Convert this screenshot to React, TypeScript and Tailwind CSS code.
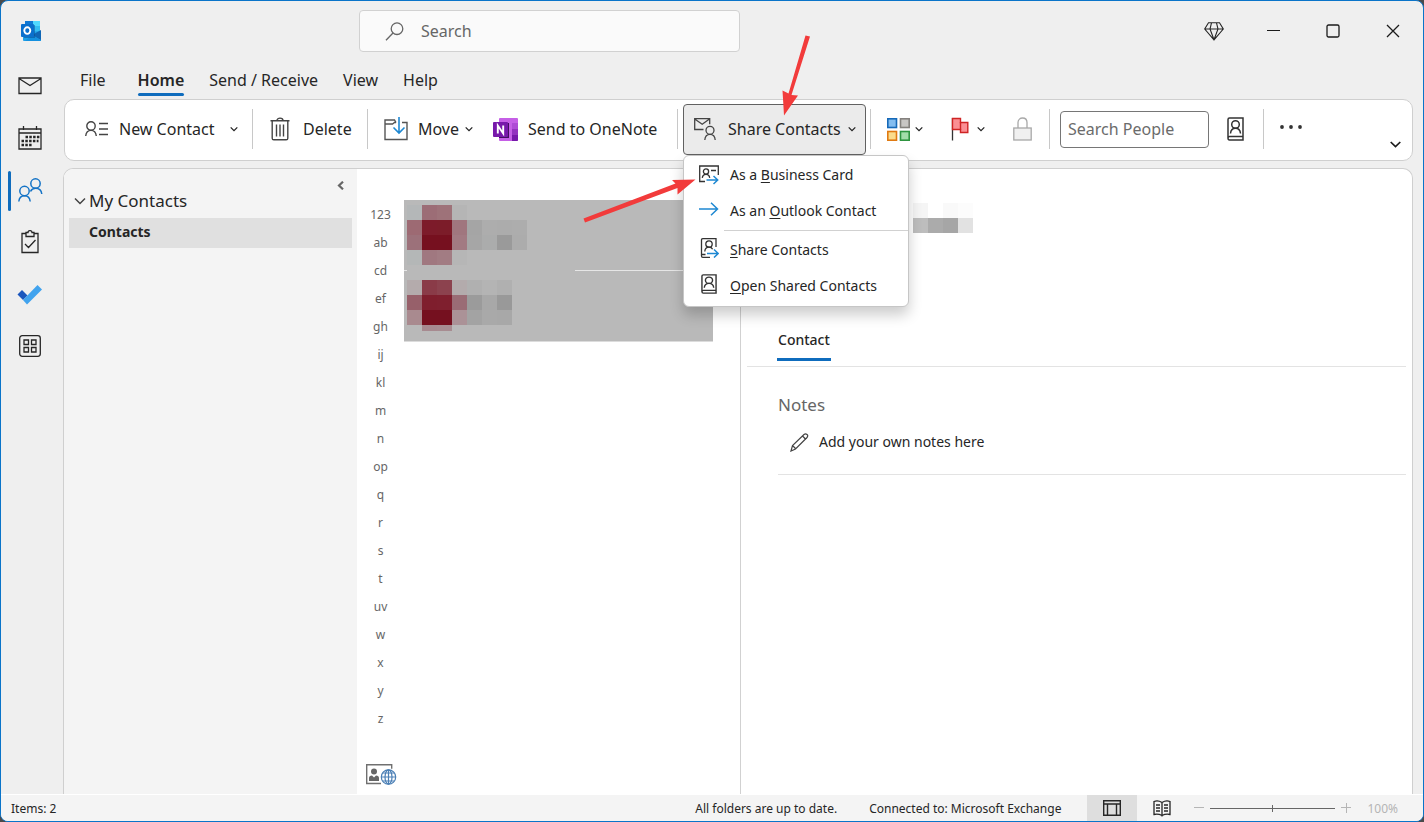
import React, { useState } from 'react';

const alphabet = [
  '123', 'ab', 'cd', 'ef', 'gh', 'ij', 'kl', 'm', 'n', 'op',
  'q', 'r', 's', 't', 'uv', 'w', 'x', 'y', 'z'
];

const tabs = ['File', 'Home', 'Send / Receive', 'View', 'Help'];

// Redacted rows of the contact list, one colour per 15px block
const mosaic = [
  { y: 0, h: 15, colors: ['#b4b7b8', '#9c6d76', '#9e7279', '#b5b5b5'] },
  { y: 15, h: 15, colors: ['#9d6a73', '#7d1b2a', '#7c1c29', '#a0767e', '#a5a5a5', '#adadad', '#acacac', '#adadad'] },
  { y: 30, h: 15, colors: ['#9c717a', '#76101f', '#76101f', '#a27a82', '#a6a6a6', '#abacac', '#9a9a9a', '#acacac'] },
  { y: 45, h: 15, colors: ['#b4b7b7', '#a07880', '#a27c83', '#b6b6b6'] },
  { y: 60, h: 15, colors: Array(11).fill('#b9b9b9') },
  { y: 75, h: 15, colors: ['#b4abac', '#8a3b48', '#8c424e', '#b3abac', '#b0b0b0', '#b4b4b4', '#b0b0b0'] },
  { y: 90, h: 15, colors: ['#97606a', '#7f1e2d', '#7f1f2e', '#9a6c75', '#9b9b9b', '#a8a8a8', '#999999'] },
  { y: 105, h: 15, colors: ['#a98a8f', '#75101f', '#75101f', '#ab9297', '#a3a3a3', '#a9a9a9', '#a8a8a8'] },
  { y: 120, h: 6, colors: ['#b9b9b9', '#a78a90', '#a78c91'] }
];

function Chevron({ className = '' }) {
  return (
    <svg className={`w-2 h-2 shrink-0 ${className}`} viewBox="0 0 8 8" fill="none" stroke="#262626" strokeWidth="1.3">
      <path d="M.7 2.4 4 5.6l3.3-3.2" />
    </svg>
  );
}

function Divider() {
  return <div className="w-px h-10 bg-[#c8c8c8] shrink-0" />;
}

function OutlookLogo() {
  return (
    <svg className="w-5 h-5" viewBox="0 0 20 20">
      <rect x="4" y="0" width="15" height="14" rx=".5" fill="#28a8ea" />
      <rect x="4" y="0" width="8" height="5" fill="#0f78d4" />
      <rect x="12" y="0" width="7" height="5" fill="#50d9ff" />
      <rect x="12" y="5" width="7" height="5" fill="#34bdf2" />
      <path d="M2 11h18v8q0 1-1 1H3q-1 0-1-1z" fill="#1da0e8" />
      <path d="M20 9v10l-9-5z" fill="#1066b5" />
      <path d="M11 14l9 5.500v.5H4l7-6z" fill="#1490df" />
      <rect x="3" y="4" width="11" height="13" fill="#064a8c" opacity=".5" />
      <rect x="0" y="3" width="13" height="13" rx="1" fill="#0a6fcd" />
      <ellipse cx="6.300" cy="9.600" rx="3" ry="3.300" fill="none" stroke="#fff" strokeWidth="1.900" />
    </svg>
  );
}

function MailIcon() {
  return (
    <svg width="24" height="18" viewBox="0 0 24 18" fill="none" stroke="#262626" strokeWidth="1.3">
      <path d="M1 1h22v15.500H1zM1 1.500l11 7 11-7" />
    </svg>
  );
}

function CalendarIcon() {
  return (
    <svg width="24" height="24" viewBox="0 0 24 24" fill="none" stroke="#262626" strokeWidth="1.3">
      <path d="M1 3h22v20H1zM1 7h22M5.500 0v4M18.500 0v4" />
      <path d="M7.500 11h14M3.500 15h17M3.500 19h11" strokeWidth="2.400" strokeDasharray="2.500 1.300" />
    </svg>
  );
}

function PeopleIcon() {
  return (
    <svg width="25" height="24" viewBox="0 0 25 24" fill="none" stroke="#1473c6" strokeWidth="1.500">
      <circle cx="17.500" cy="5.500" r="4.700" />
      <circle cx="6.500" cy="13" r="4.700" />
      <path d="M.8 23.500c.5-4 2.500-5.700 5.700-5.700s5.200 1.700 5.700 5.700M12.500 13.500c1-2.300 2.600-3.200 5-3.200 3.400 0 5.800 2 6.300 5.700" />
    </svg>
  );
}

function TasksIcon() {
  return (
    <svg width="18" height="24" viewBox="0 0 18 24" fill="none" stroke="#262626" strokeWidth="1.300">
      <path d="M5 3.500H1v19h16v-19h-4" />
      <path d="M5 6.500v-4h2c0-2.500 4-2.500 4 0h2v4zM4 14l3.500 3.500 7-7.500" />
    </svg>
  );
}

function TodoIcon() {
  return (
    <svg width="26" height="21" viewBox="0 0 26 21">
      <path d="M.5 10.500 5 6l5.500 5.500L6 16z" fill="#1a56bd" />
      <path d="M6 16 20.500 1 25 5.500 10 20.500z" fill="#41a3ee" />
    </svg>
  );
}

function AppsIcon() {
  return (
    <svg width="22" height="22" viewBox="0 0 22 22" fill="none" stroke="#262626" strokeWidth="1.300">
      <rect x=".7" y=".7" width="20.600" height="20.600" rx="2.500" />
      <path d="M5 5h4.500v4.500H5zM12.500 5H17v4.500h-4.500zM5 12.500h4.500V17H5zM12.500 12.500H17V17h-4.500z" />
    </svg>
  );
}

function NewContactIcon() {
  return (
    <svg width="24" height="16" viewBox="0 0 24 16" fill="none" stroke="#444" strokeWidth="1.400">
      <circle cx="6" cy="5" r="4.200" />
      <path d="M.7 15c.4-3.600 2.300-5.600 5.300-5.600s4.900 2 5.300 5.600M14 2.500h9M14 8h9M14 13.500h9" />
    </svg>
  );
}

function TrashIcon() {
  return (
    <svg width="20" height="24" viewBox="0 0 20 24" fill="none" stroke="#444" strokeWidth="1.400">
      <path d="M.5 3.700h19M2.200 3.700v17.500q0 1.600 1.600 1.600h12.400q1.600 0 1.600-1.600V3.700M7 3.500C7 .3 13 .3 13 3.500M6.500 7.500v12M10 7.500v12M13.500 7.500v12" />
    </svg>
  );
}

function MoveIcon() {
  return (
    <svg width="24" height="24" viewBox="0 0 24 24" fill="none" stroke="#555" strokeWidth="1.400">
      <path d="M12 5.500 10.500 3H1v19.500h22v-17h-5M1 7h7.500l2-1.500H12" />
      <path d="M15 0v16M9.500 10.500 15 16l5.500-5.500" stroke="#1e88d2" strokeWidth="1.600" />
    </svg>
  );
}

function OneNoteIcon() {
  return (
    <svg width="25" height="24" viewBox="0 0 25 24">
      <rect x="6" y="1" width="19" height="23" rx="1" fill="#c55fe6" />
      <rect x="19" y="6" width="6" height="6" fill="#ae4bd5" />
      <rect x="19" y="12" width="6" height="6" fill="#9332bf" />
      <path d="M19 18h6v5q0 1-1 1h-5z" fill="#7719aa" />
      <rect x="6" y="6" width="10" height="15" fill="#41105f" />
      <rect x="0" y="5" width="15" height="15" rx="1" fill="#7719aa" />
      <path d="M4.800 16.500v-8l5.400 8v-8" fill="none" stroke="#fff" strokeWidth="1.900" />
    </svg>
  );
}

function ShareContactsIcon() {
  return (
    <svg width="22" height="23" viewBox="0 0 22 23" fill="none" stroke="#444" strokeWidth="1.300">
      <path d="M9.500 11.500H.7V.7h15v5.500M.7 1l7.500 5.300L15.500 1" />
      <circle cx="16" cy="12.300" r="4" />
      <path d="M10.800 22c.3-3.700 2-5.600 5.200-5.600s4.900 1.900 5.200 5.600" />
    </svg>
  );
}

function CategorizeIcon() {
  return (
    <svg width="23" height="23" viewBox="0 0 23 23" strokeWidth="1.600">
      <rect x=".8" y=".8" width="8.700" height="8.700" fill="#83bdf0" stroke="#1669b8" />
      <rect x="13.500" y=".8" width="8.700" height="8.700" fill="#c8c6c4" stroke="#84817e" />
      <rect x=".8" y="13.500" width="8.700" height="8.700" fill="#fbdc8b" stroke="#e07a12" />
      <rect x="13.500" y="13.500" width="8.700" height="8.700" fill="#a2dda9" stroke="#2e9440" />
    </svg>
  );
}

function FlagIcon() {
  return (
    <svg width="18" height="24" viewBox="0 0 18 24">
      <path d="M1.500 1v22.500" stroke="#333" strokeWidth="1.300" />
      <path d="M1.500 1.500h8v4h7.300v10H9.500v-3h-8z" fill="#fb8f94" stroke="#cf2424" strokeWidth="1.400" />
      <path d="M9.500 5v8" stroke="#cf2424" strokeWidth="1.400" />
    </svg>
  );
}

function LockIcon() {
  return (
    <svg width="19" height="24" viewBox="0 0 19 24" stroke="#a8a8a8" strokeWidth="1.300">
      <path d="M5 11V5.500c0-6 9-6 9 0V11" fill="none" />
      <rect x=".8" y="11" width="17.400" height="12" fill="#f0f0f0" />
    </svg>
  );
}

function AddressBookIcon({ width = 17, height = 24, className = '' }) {
  return (
    <svg className={className} width={width} height={height} viewBox="0 0 17 24" preserveAspectRatio="none" fill="none" stroke="#333" strokeWidth="1.500">
      <path d="M16 19.500V1H2.500Q1 1 1 2.500V21q0 2 1.500 2H16v-3.500H2.500Q1 19.500 1 21" />
      <circle cx="8.500" cy="7.500" r="3.800" />
      <path d="M3.500 16.500c.3-3.500 2-5.200 5-5.200s4.700 1.700 5 5.200" />
    </svg>
  );
}

function BusinessCardIcon() {
  return (
    <svg width="20" height="20" viewBox="0 0 20 20" fill="none" stroke="#333" strokeWidth="1.300">
      <path d="M6 16.500H.7V1h18.600v9M12 5.500h5" />
      <circle cx="7" cy="6.500" r="2.600" />
      <path d="M3.300 12.800c.3-2.500 1.500-3.500 3.700-3.500s3.400 1 3.700 3.500" />
      <path d="M7.500 15h11M14.500 11l4.200 4-4.200 4" stroke="#1e88d2" strokeWidth="1.500" />
    </svg>
  );
}

function ArrowIcon() {
  return (
    <svg className="mb-1" width="20" height="14" viewBox="0 0 20 14" fill="none" stroke="#1e88d2" strokeWidth="1.500">
      <path d="M0 7h18.500M12 .8 18.500 7 12 13.200" />
    </svg>
  );
}

function ShareBookIcon() {
  return (
    <svg className="mb-1" width="20" height="20" viewBox="0 0 20 20" fill="none" stroke="#333" strokeWidth="1.300">
      <path d="M17 9V.7H3.800Q2.500.7 2.500 2v16q0 1.300 1.300 1.300H11M2.500 16.500h4" />
      <circle cx="10" cy="6" r="3.200" />
      <path d="M5.800 13.500c.2-3 1.600-4.300 4.200-4.300 1.800 0 3 .7 3.600 2" />
      <path d="M8 15.500h11M15 11.500l4.200 4-4.200 4" stroke="#1e88d2" strokeWidth="1.500" />
    </svg>
  );
}

function CardGlobeIcon() {
  return (
    <svg width="31" height="21" viewBox="0 0 31 21" fill="none">
      <path d="M15 19.500H.7V.7h25v4" stroke="#707070" strokeWidth="1.400" />
      <circle cx="8" cy="7.500" r="3" fill="#666" />
      <path d="M3 17v-3q0-2.500 3-2.500l2 2 2-2q3 0 3 2.500v3z" fill="#666" />
      <g stroke="#4a7fb5" strokeWidth="1.200">
        <circle cx="22.500" cy="13" r="7.200" />
        <ellipse cx="22.500" cy="13" rx="3.500" ry="7.200" />
        <path d="M15.300 13h14.400M22.500 5.800v14.400M16.500 9h12M16.500 17h12" />
      </g>
    </svg>
  );
}

function DiamondIcon() {
  return (
    <svg width="20" height="19" viewBox="0 0 20 19" fill="none" stroke="#262626" strokeWidth="1.100">
      <path d="M4.500.8h11L19.300 7 10 17.800.7 7zM.7 7h18.600M7.500.8 6 7l4 10.800L14 7 12.500.8" />
    </svg>
  );
}

const rail = [
  { label: 'Mail', icon: <MailIcon /> },
  { label: 'Calendar', icon: <CalendarIcon /> },
  { label: 'People', icon: <PeopleIcon /> },
  { label: 'Tasks', icon: <TasksIcon /> },
  { label: 'To Do', icon: <TodoIcon /> },
  { label: 'More Apps', icon: <AppsIcon /> }
];

function MenuItem({ icon, children }) {
  return (
    <button role="menuitem" className="flex items-center w-full h-9 text-left hover:bg-gray-100">
      <span className="flex justify-center w-[50px] shrink-0">{icon}</span>
      <span className="-ml-1 whitespace-nowrap">{children}</span>
    </button>
  );
}

export default function App() {
  const [activeTab, setActiveTab] = useState('Home');
  const [activeApp, setActiveApp] = useState('People');
  const [menuOpen, setMenuOpen] = useState(true);

  return (
    <div className="bg-[#4a4a4a] font-['Noto_Sans',sans-serif] text-[#262626]">
      <div className="relative flex flex-col min-h-screen bg-[#efefef] border border-[#0a74c9] rounded-lg overflow-hidden">
        {/* Title bar */}
        <header className="flex items-center h-[58px] pt-0.5 shrink-0">
          <div className="flex w-[358px] pl-5 shrink-0">
            <OutlookLogo />
          </div>
          <label className="flex items-center w-[381px] h-[42px] bg-[#fafafa] border border-[#d1d1d1] rounded">
            <svg className="ml-[25px] mr-[17px] shrink-0" width="19" height="19" viewBox="0 0 19 19" fill="none" stroke="#666" strokeWidth="1.3">
              <circle cx="12" cy="6.700" r="5.800" />
              <path d="M8 11 1 18.300" />
            </svg>
            <input type="text" aria-label="Search" placeholder="Search" className="flex-1 min-w-0 text-base bg-transparent outline-none placeholder:text-[#666]" />
          </label>
          <div className="flex ml-auto">
            <button aria-label="Premium" className="flex items-center justify-center w-[60px] h-10 pl-0.5"><DiamondIcon /></button>
            <button aria-label="Minimize" className="flex items-center justify-center w-[60px] h-10">
              <svg width="13" height="13" viewBox="0 0 13 13" stroke="#1b1b1b" strokeWidth="1.2"><path d="M0 5.500h13" /></svg>
            </button>
            <button aria-label="Maximize" className="flex items-center justify-center w-[60px] h-10">
              <svg width="14" height="14" viewBox="0 0 14 14" fill="none" stroke="#1b1b1b" strokeWidth="1.3"><rect x="1" y="1" width="12" height="12" rx="1.5" /></svg>
            </button>
            <button aria-label="Close" className="flex items-center justify-center w-[60px] h-10">
              <svg width="14" height="14" viewBox="0 0 14 14" stroke="#1b1b1b" strokeWidth="1.3"><path d="M1 1l12 12M13 1 1 13" /></svg>
            </button>
          </div>
        </header>

        <div className="flex flex-1">
          {/* App rail */}
          <nav className="flex flex-col w-[62px] pt-px shrink-0">
            {rail.map(item => (
              <button
                key={item.label}
                aria-label={item.label}
                onClick={() => setActiveApp(item.label)}
                className="relative flex items-center justify-center h-[52px] pr-1"
              >
                {activeApp === item.label && (
                  <span className="absolute left-[7px] top-[7px] w-[3px] h-10 rounded bg-[#0f6cbd]" />
                )}
                {item.icon}
              </button>
            ))}
          </nav>

          <div className="flex flex-col flex-1 min-w-0 pr-2.5">
            {/* Tabs */}
            <div role="tablist" className="flex gap-[25px] h-10 pl-[17px] text-base shrink-0">
              {tabs.map(tab => (
                <button
                  key={tab}
                  role="tab"
                  aria-selected={activeTab === tab}
                  onClick={() => setActiveTab(tab)}
                  className={`relative pt-0.5 first:mr-[7px] whitespace-nowrap ${activeTab === tab ? 'font-semibold' : ''}`}
                >
                  {tab}
                  {activeTab === tab && (
                    <span className="absolute inset-x-0 bottom-[3px] h-[3px] rounded bg-[#0f6cbd]" />
                  )}
                </button>
              ))}
            </div>

            {/* Ribbon */}
            <div className="relative flex items-center h-[62px] ml-px pb-0.5 bg-white border border-[#cfcfcf] rounded-[10px] text-base whitespace-nowrap shrink-0">
              <button className="flex items-center w-[187px] h-[50px] pl-5 shrink-0">
                <NewContactIcon />
                <span className="ml-2.5">New Contact</span>
                <Chevron className="ml-auto mr-3.5" />
              </button>
              <Divider />
              <button className="flex items-center w-[114px] h-[50px] pl-[17px] shrink-0">
                <TrashIcon />
                <span className="ml-[13px]">Delete</span>
              </button>
              <Divider />
              <button className="flex items-center w-[109px] h-[50px] pl-4 shrink-0">
                <MoveIcon />
                <span className="ml-2.5">Move</span>
                <Chevron className="ml-auto mr-1" />
              </button>
              <button className="flex items-center w-[200px] h-[50px] pl-4 shrink-0">
                <OneNoteIcon />
                <span className="ml-2.5">Send to OneNote</span>
              </button>
              <Divider />
              <div className="relative ml-[5px] mr-1 shrink-0">
                <button
                  aria-haspopup="menu"
                  aria-expanded={menuOpen}
                  onClick={() => setMenuOpen(!menuOpen)}
                  className="flex items-center w-[183px] h-[51px] pl-2.5 bg-[#ebebeb] border border-[#616161] rounded"
                >
                  <ShareContactsIcon />
                  <span className="ml-3">Share Contacts</span>
                  <Chevron className="ml-auto mr-[9px]" />
                </button>
                {menuOpen && (
                  <div role="menu" className="absolute z-20 left-0 top-[51px] w-[226px] pt-px pb-0.5 bg-white border border-[#c6c6c6] rounded-md shadow-[0_8px_14px_rgba(0,0,0,0.2)] text-sm">
                    <MenuItem icon={<BusinessCardIcon />}>As a <u className="underline-offset-2">B</u>usiness Card</MenuItem>
                    <MenuItem icon={<ArrowIcon />}>As an <u className="underline-offset-2">O</u>utlook Contact</MenuItem>
                    <div className="h-px mt-px mb-px ml-10 bg-[#d1d1d1]" />
                    <MenuItem icon={<ShareBookIcon />}><u className="underline-offset-2">S</u>hare Contacts</MenuItem>
                    <MenuItem icon={<AddressBookIcon width={16} height={20} className="mb-1" />}><u className="underline-offset-2">O</u>pen Shared Contacts</MenuItem>
                  </div>
                )}
              </div>
              <Divider />
              <button aria-label="Categorize" className="flex items-center gap-[5px] w-16 h-[50px] pl-4 shrink-0">
                <CategorizeIcon />
                <Chevron />
              </button>
              <button aria-label="Follow Up" className="flex items-center gap-2 w-[60px] h-[50px] pl-4 shrink-0">
                <FlagIcon />
                <Chevron />
              </button>
              <button aria-label="Private" className="flex items-center w-[54px] h-[50px] pl-[18px] shrink-0">
                <LockIcon />
              </button>
              <Divider />
              <input
                type="text"
                aria-label="Search People"
                placeholder="Search People"
                className="w-[149px] h-[37px] ml-2.5 px-[7px] border border-[#767676] rounded outline-none text-base placeholder:text-[#6b6b6b] shrink-0"
              />
              <button aria-label="Address Book" className="flex items-center justify-center w-[54px] h-[50px] pr-px shrink-0">
                <AddressBookIcon />
              </button>
              <Divider />
              <button aria-label="More commands" className="flex items-center justify-center w-[54px] h-[50px] pb-1 shrink-0">
                <svg width="22" height="4" viewBox="0 0 22 4" fill="#333">
                  <circle cx="2" cy="2" r="1.900" />
                  <circle cx="11" cy="2" r="1.900" />
                  <circle cx="20" cy="2" r="1.900" />
                </svg>
              </button>
              <button aria-label="Ribbon options" className="self-end ml-auto px-[11px] pb-2.5">
                <svg width="11" height="7" viewBox="0 0 11 7" fill="none" stroke="#1b1b1b" strokeWidth="1.7"><path d="M.7 1 5.500 5.500 10.300 1" /></svg>
              </button>
            </div>

            {/* Panels */}
            <div className="flex flex-1 mt-[7px] bg-white border border-b-0 border-[#cfcfcf] rounded-t-[10px]">
              <aside className="w-[293px] px-[5px] bg-[#f4f4f4] rounded-tl-[9px] shrink-0">
                <div className="flex justify-end h-[17px] pt-[11px] pr-2">
                  <button aria-label="Collapse folder pane" className="h-2.5">
                    <svg width="7" height="9" viewBox="0 0 7 9" fill="none" stroke="#666" strokeWidth="2.2"><path d="M6 .7 2 4.500l4 3.800" /></svg>
                  </button>
                </div>
                <button className="flex items-center gap-[3px] h-8 pl-[5px] pb-0.5 text-[17px]">
                  <svg width="12" height="8" viewBox="0 0 12 8" fill="none" stroke="#444" strokeWidth="1.5"><path d="M1 1.500 6 6.500l5-5" /></svg>
                  My Contacts
                </button>
                <button className="block w-[283px] h-[30px] pl-5 pb-0.5 bg-[#e0e0e0] text-left text-sm font-bold">Contacts</button>
              </aside>

              <section className="flex w-[383px] shrink-0">
                <div className="flex flex-col w-[47px] pt-8 text-xs text-[#666] shrink-0">
                  {alphabet.map(letter => (
                    <button key={letter} className="h-7">{letter}</button>
                  ))}
                  <button aria-label="Additional languages" className="w-8 ml-[9px] mt-auto mb-[9px]">
                    <CardGlobeIcon />
                  </button>
                </div>
                <div className="relative w-[309px] mt-[31px]">
                  <div className="h-[70px] bg-[#b9b9b9]" />
                  <div className="h-px bg-[#e6e6e6]" />
                  <div className="h-[70px] bg-[#b9b9b9]" />
                  <div className="h-px bg-[#dcdcdc]" />
                  <svg className="absolute left-[3px] top-[5px]" width="168" height="126" shapeRendering="crispEdges">
                    {mosaic.map(row =>
                      row.colors.map((color, i) => (
                        <rect key={`${row.y}-${i}`} x={i * 15} y={row.y} width={i === 10 ? 18 : 15} height={row.h} fill={color} />
                      ))
                    )}
                  </svg>
                </div>
              </section>

              {/* Reading pane */}
              <section className="flex-1 min-w-0 pl-1.5 pr-1.5 border-l border-[#d1d1d1]">
                <svg className="ml-[166px] mt-[34px]" width="60" height="30" shapeRendering="crispEdges">
                  <rect width="15" height="15" fill="#f5f5f5" />
                  <rect x="30" width="15" height="15" fill="#f9f9f9" />
                  <rect x="45" width="15" height="15" fill="#fcfcfc" />
                  <rect y="15" width="15" height="15" fill="#bdbdbd" />
                  <rect x="15" y="15" width="15" height="15" fill="#ababab" />
                  <rect x="30" y="15" width="15" height="15" fill="#a6a6a6" />
                  <rect x="45" y="15" width="15" height="15" fill="#e2e2e2" />
                </svg>
                <div className="flex mt-[93px] h-[41px] pl-[30px] border-b border-[#e3e3e3]">
                  <button className="h-[35px] px-px pb-1 border-b-3 border-[#0f6cbd] text-sm font-medium">Contact</button>
                </div>
                <div className="ml-[31px] h-[108px] border-b border-[#e3e3e3]">
                  <h2 className="pt-[26px] text-[17px] leading-6 text-[#666]">Notes</h2>
                  <button className="flex items-center mt-[15px] ml-3 h-5 text-sm whitespace-nowrap">
                    <svg className="mr-2.5" width="19" height="19" viewBox="0 0 19 19" fill="none" stroke="#444" strokeWidth="1.200">
                      <path d="M1 18l1.500-5.500L14 1.500q1.500-1.200 3 0t0 3L5.500 16zM12.500 3l3.500 3.500M2.500 12.500 6 16" />
                    </svg>
                    Add your own notes here
                  </button>
                </div>
              </section>
            </div>
          </div>
        </div>

        {/* Status bar */}
        <footer className="flex items-center h-[27px] pl-2.5 bg-[#f4f4f4] border-t border-white text-xs whitespace-nowrap shrink-0">
          <span className="pt-px">Items: 2</span>
          <span className="ml-auto pt-px">All folders are up to date.</span>
          <span className="ml-8 mr-[26px] pt-px">Connected to: Microsoft Exchange</span>
          <button aria-label="Normal view" className="flex items-center justify-center w-[50px] h-full bg-[#dedede]">
            <svg width="18" height="16" viewBox="0 0 18 16" fill="none" stroke="#262626" strokeWidth="1.400"><path d="M.7.700h16.600v14.600H.7zM.7 4h16.600M4.500 4v11M13.500 4v11" /></svg>
          </button>
          <button aria-label="Reading view" className="flex items-center justify-center w-[49px] h-full">
            <svg width="18" height="17" viewBox="0 0 18 17" fill="none" stroke="#262626" strokeWidth="1.300">
              <path d="M9 2.500Q5 0 1 1.500v13q4-1 8 1 4-2 8-1v-13Q13 0 9 2.500v14" />
              <path d="M3 5h4M3 8h4M3 11h4M11 5h4M11 8h4M11 11h4" />
            </svg>
          </button>
          <button aria-label="Zoom out" className="ml-1 p-1">
            <svg width="10" height="10" viewBox="0 0 10 10" stroke="#b5b5b5"><path d="M0 4.500h10" /></svg>
          </button>
          <div className="relative flex items-center justify-center w-[125px] h-5 mx-0.5">
            <div className="absolute inset-x-0 h-px bg-[#666]" />
            <div className="w-px h-[7px] bg-[#666]" />
            <input type="range" aria-label="Zoom" className="absolute inset-0 w-full opacity-0" />
          </div>
          <button aria-label="Zoom in" className="p-1">
            <svg width="10" height="10" viewBox="0 0 10 10" stroke="#b5b5b5"><path d="M0 4.500h10M5.500 0v10" /></svg>
          </button>
          <span className="ml-3 mr-[25px] pt-px text-[#b5b5b5]">100%</span>
        </footer>

        {/* Callout arrows */}
        <svg className="absolute left-0 top-0 z-30 pointer-events-none" width="860" height="240" fill="#f23b3b">
          <path d="M804.500 34.500 809 35.500 790.500 94 797 94.500 783 114.500 781.500 89.500 787.500 92.500z" />
          <path d="M582.500 217.500 674.500 182.500 671 179 694.500 178.500 676.500 193.500 676.500 187 584 221.500z" />
        </svg>
      </div>
    </div>
  );
}
